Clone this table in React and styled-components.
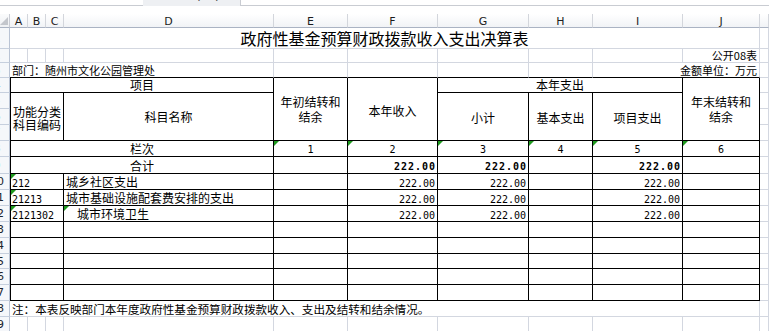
import React from 'react';
import styled, { createGlobalStyle, css } from 'styled-components';

const GRID = '#d3d7e0';
const LINE = '#000';
const CJK = '"Noto Sans CJK SC", "Noto Sans", sans-serif';
const MONO = '"DejaVu Sans Mono", "Liberation Mono", monospace';

const Global = createGlobalStyle`
  html, body { margin: 0; padding: 0; background: #fff; }
  body { width: 769px; height: 331px; overflow: hidden; font-family: ${CJK}; }
`;

const Page = styled.div`
  width: 769px;
  height: 331px;
  overflow: hidden;
  display: flex;
  flex-direction: column;
  background: #fff;
`;

const TopStrip = styled.div`
  height: 14px;
  flex-shrink: 0;
  display: flex;
  align-items: flex-start;
  background: #fff;
`;

const NameBox = styled.div`
  width: 143px;
  height: 5px;
  background: #fff;
  border-bottom: 1px solid #c9ccd2;
`;

const FxArea = styled.div`
  width: 97px;
  height: 6px;
  background: #eef0f3;
  position: relative;
  overflow: hidden;
  font: 12px "DejaVu Sans", sans-serif;
  color: #444;
`;

const Paren = styled.span`
  position: absolute;
  top: -11px;
  left: ${p => p.$x}px;
`;

const FormulaBox = styled.div`
  flex: 1;
  height: 5px;
  background: #fff;
  border-bottom: 1px solid #c9ccd2;
  border-left: 1px solid #c9ccd2;
`;

const Sheet = styled.div`
  display: grid;
  grid-template-columns: 10px 18px 18px 18px 210px 74px 90px 91px 64px 90px 77px 9px;
  grid-template-rows: 14px 21px 14px 15px 15px 16px 16px 16px 16px 17px 16px 16px 16px 16px 16px 15px 16px 16px 16px 15px;
  background: #fff;
`;

const Corner = styled.div`
  grid-column: 1;
  grid-row: 1;
  position: relative;
  box-sizing: border-box;
  background: linear-gradient(#fafbfc, #eef0f3);
  border-right: 1px solid #c9ccd4;
  border-bottom: 1px solid #aab3c3;
  &::after {
    content: '';
    position: absolute;
    right: 1px;
    bottom: 2px;
    border-left: 8px solid transparent;
    border-bottom: 8px solid #c3c6cc;
  }
`;

const ColHead = styled.div`
  grid-column: ${p => p.$c};
  grid-row: 1;
  box-sizing: border-box;
  background: linear-gradient(#ffffff, #f1f3f6);
  border-right: 1px solid #d3d6dc;
  border-bottom: 1px solid #aab3c3;
  display: flex;
  align-items: center;
  justify-content: center;
  overflow: hidden;
  font: 11px "DejaVu Sans", sans-serif;
  color: #1c1c1c;
  padding-top: 1px;
`;

const RowHead = styled.div`
  grid-column: 1;
  grid-row: ${p => p.$r};
  box-sizing: border-box;
  background: #f5f7fa;
  border-right: 1px solid #b9c3d4;
  border-bottom: 1px solid #c6cfdd;
  display: flex;
  align-items: center;
  justify-content: flex-end;
  overflow: hidden;
`;

const RowNum = styled.span`
  flex-shrink: 0;
  width: 24px;
  text-align: center;
  font: 11px "DejaVu Sans", sans-serif;
  color: #20242c;
`;

const Cell = styled.div`
  grid-column: ${p => p.$c};
  grid-row: ${p => p.$r};
  position: relative;
  box-sizing: border-box;
  min-width: 0;
  display: flex;
  align-items: flex-end;
  justify-content: ${p => (p.$right ? 'flex-end' : 'flex-start')};
  border-right: 1px solid ${p => (p.$br ? LINE : GRID)};
  border-bottom: 1px solid ${p => (p.$bb ? LINE : GRID)};
  padding: 0 2px 1px ${p => (p.$indent != null ? p.$indent : 2)}px;
  font-family: ${CJK};
  font-size: ${p => p.$fs || 12}px;
  line-height: 12px;
  white-space: nowrap;
  overflow: hidden;
  color: #000;
`;

const TitleCell = styled(Cell)`
  align-items: center;
  justify-content: center;
  font-size: 16px;
  line-height: 18px;
  padding: 0;
`;

const NoteCell = styled(Cell)`
  font-size: 11.6px;
  padding-left: 2px;
`;

const flagStyle = css`
  &::before {
    content: '';
    position: absolute;
    left: 0;
    top: 0;
    border-top: 5px solid #1f9a1f;
    border-right: 5px solid transparent;
  }
`;

const Box = styled(Cell).attrs(() => ({ $br: true, $bb: true }))`
  ${p => p.$bl && css`border-left: 1px solid ${LINE};`}
  ${p => p.$flag && flagStyle}
`;

const HeadBox = styled(Box)`
  align-items: center;
  justify-content: center;
  text-align: center;
  white-space: normal;
  line-height: ${p => p.$lh || 12}px;
  padding: ${p => p.$pt || 0}px ${p => p.$px || 1}px 0;
`;

const CodeBox = styled(Box)`
  font-family: ${MONO};
  font-size: 10px;
  line-height: 11px;
  padding: 0 1px 0 1px;
`;

const NumBox = styled(Box)`
  justify-content: flex-end;
  font-family: ${MONO};
  font-size: 10px;
  line-height: 11px;
  padding: 0 ${p => (p.$bold ? 1 : 2)}px ${p => (p.$bold ? 1 : 0)}px 0;
  ${p => p.$bold && css`font-weight: bold; letter-spacing: 1px;`}
`;

const IndexBox = styled(Box)`
  justify-content: center;
  font-family: ${MONO};
  font-size: 10px;
  line-height: 11px;
  padding: 0 0 1px 0;
`;

const COLS = ['A', 'B', 'C', 'D', 'E', 'F', 'G', 'H', 'I', 'J', 'K'];

const DATA = [
  { code: '212', name: '城乡社区支出', f: '222.00', g: '222.00', i: '222.00' },
  { code: '21213', name: '城市基础设施配套费安排的支出', f: '222.00', g: '222.00', i: '222.00' },
  { code: '2121302', name: '城市环境卫生', indent: 13, flagName: true, f: '222.00', g: '222.00', i: '222.00' },
  {}, {}, {}, {}, {},
];

export default function App() {
  const rowNums = Array.from({ length: 19 }, (_, i) => i + 1);
  return (
    <Page>
      <Global />
      <TopStrip>
        <NameBox />
        <FxArea>
          <Paren $x={53}>(</Paren>
          <Paren $x={72}>)</Paren>
        </FxArea>
        <FormulaBox />
      </TopStrip>
      <Sheet>
        <Corner />
        {COLS.map((c, i) => (
          <ColHead key={c} $c={i + 2}>{c === 'K' ? '' : c}</ColHead>
        ))}
        {rowNums.map(n => (
          <RowHead key={n} $r={n + 1}><RowNum>{n}</RowNum></RowHead>
        ))}

        {/* row 1 */}
        <TitleCell $c="2 / 12" $r={2}>政府性基金预算财政拨款收入支出决算表</TitleCell>
        <Cell $c={12} $r={2} />

        {/* row 2 */}
        {[2, 3, 4, 5, 6, 7, 8, 9, 10].map(c => <Cell key={c} $c={c} $r={3} />)}
        <Cell $c={11} $r={3} $right $fs={11}>公开08表</Cell>
        <Cell $c={12} $r={3} />

        {/* row 3 */}
        <Cell $c="2 / 6" $r={4} $bb $fs={11}>部门：随州市文化公园管理处</Cell>
        {[6, 7, 8, 9].map(c => <Cell key={c} $c={c} $r={4} $bb />)}
        <Cell $c="10 / 12" $r={4} $bb $right $fs={11}>金额单位：万元</Cell>
        <Cell $c={12} $r={4} />

        {/* rows 4-7 header */}
        <HeadBox $c="2 / 6" $r={5} $bl>项目</HeadBox>
        <HeadBox $c={6} $r="5 / 9" $lh={15}>年初结转和结余</HeadBox>
        <HeadBox $c={7} $r="5 / 9" $pt={4}>本年收入</HeadBox>
        <HeadBox $c="8 / 11" $r={5}>本年支出</HeadBox>
        <HeadBox $c={11} $r="5 / 9" $lh={15} $px={6}>年末结转和结余</HeadBox>
        <Cell $c={12} $r={5} />
        <HeadBox $c="2 / 5" $r="6 / 9" $bl $lh={13} $pt={3}>功能分类科目编码</HeadBox>
        <HeadBox $c={5} $r="6 / 9">科目名称</HeadBox>
        <HeadBox $c={8} $r="6 / 9" $pt={3}>小计</HeadBox>
        <HeadBox $c={9} $r="6 / 9" $pt={3}>基本支出</HeadBox>
        <HeadBox $c={10} $r="6 / 9" $pt={3}>项目支出</HeadBox>
        {[6, 7, 8].map(r => <Cell key={r} $c={12} $r={r} />)}

        {/* row 8 */}
        <HeadBox $c="2 / 6" $r={9} $bl>栏次</HeadBox>
        {['1', '2', '3', '4', '5', '6'].map((t, i) => (
          <IndexBox key={t} $c={i + 6} $r={9} $flag>{t}</IndexBox>
        ))}
        <Cell $c={12} $r={9} />

        {/* row 9 */}
        <HeadBox $c="2 / 6" $r={10} $bl $pt={2}>合计</HeadBox>
        <NumBox $c={6} $r={10} />
        <NumBox $c={7} $r={10} $bold>222.00</NumBox>
        <NumBox $c={8} $r={10} $bold>222.00</NumBox>
        <NumBox $c={9} $r={10} />
        <NumBox $c={10} $r={10} $bold>222.00</NumBox>
        <NumBox $c={11} $r={10} />
        <Cell $c={12} $r={10} />

        {/* rows 10-17 */}
        {DATA.map((d, i) => {
          const r = i + 11;
          return (
            <React.Fragment key={r}>
              <CodeBox $c="2 / 5" $r={r} $bl $flag={!!d.code}>{d.code}</CodeBox>
              <Box $c={5} $r={r} $indent={d.indent != null ? d.indent : 2} $flag={d.flagName}>{d.name}</Box>
              <NumBox $c={6} $r={r} />
              <NumBox $c={7} $r={r}>{d.f}</NumBox>
              <NumBox $c={8} $r={r}>{d.g}</NumBox>
              <NumBox $c={9} $r={r} />
              <NumBox $c={10} $r={r}>{d.i}</NumBox>
              <NumBox $c={11} $r={r} />
              <Cell $c={12} $r={r} />
            </React.Fragment>
          );
        })}

        {/* row 18 */}
        <NoteCell $c="2 / 12" $r={19}>注：本表反映部门本年度政府性基金预算财政拨款收入、支出及结转和结余情况。</NoteCell>
        <Cell $c={12} $r={19} />

        {/* row 19 */}
        {[2, 3, 4, 5, 6, 7, 8, 9, 10, 11, 12].map(c => <Cell key={c} $c={c} $r={20} />)}
      </Sheet>
    </Page>
  );
}
